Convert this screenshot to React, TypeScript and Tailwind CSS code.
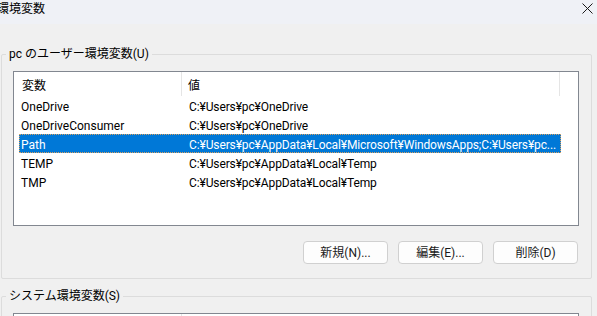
import React from "react";

interface EnvVar {
  name: string;
  value: string;
}

const userVars: EnvVar[] = [
  { name: "OneDrive", value: "C:¥Users¥pc¥OneDrive" },
  { name: "OneDriveConsumer", value: "C:¥Users¥pc¥OneDrive" },
  {
    name: "Path",
    value: "C:¥Users¥pc¥AppData¥Local¥Microsoft¥WindowsApps;C:¥Users¥pc...",
  },
  { name: "TEMP", value: "C:¥Users¥pc¥AppData¥Local¥Temp" },
  { name: "TMP", value: "C:¥Users¥pc¥AppData¥Local¥Temp" },
];

const WinButton = ({ label }: { label: string }) => (
  <button className="w-[85px] h-[23px] rounded-[4px] border border-[#d0d0d0] bg-[#fdfdfd] text-[12px] text-[#1a1a1a] leading-none">
    {label}
  </button>
);

const App: React.FC = () => {
  const selected = "Path";

  return (
    <div className="w-[597px] h-[316px] overflow-hidden bg-[#f0f0f0] text-[12px] text-black font-['Roboto','Noto_Sans_CJK_JP',sans-serif]">
      {/* title bar */}
      <div className="h-6 bg-[#eff1f6] flex items-start justify-between">
        <span className="-ml-[3px] mt-[1px] text-[12px] leading-[16px]">環境変数</span>
        <svg width="11" height="11" viewBox="0 0 11 11" className="mt-[3px] mr-[4px]">
          <path d="M0.5 0.5 L10.5 10.5 M10.5 0.5 L0.5 10.5" stroke="#1a1a1a" strokeWidth="1" />
        </svg>
      </div>

      <fieldset className="mt-[22px] ml-[1px] w-[591px] border border-[#dcdcdc] rounded-[2px] pl-[11px] pt-[9px] pb-[14px]">
        <legend className="-ml-[7px] px-[3px] leading-[16px]">pc のユーザー環境変数(U)</legend>

        <div className="w-[566px] h-[155px] border border-[#828790] bg-white">
          <div className="flex h-6 items-center">
            <div className="w-[168px] pl-[8px] pt-[4px] h-full flex items-center border-r border-[#e5e5e5]">変数</div>
            <div className="w-[378px] pl-[6px] pt-[4px] h-full flex items-center border-r border-[#e5e5e5]">値</div>
          </div>
          <div className="pl-[5px]">
            {userVars.map((v) => {
              const active = v.name === selected;
              return (
                <div
                  key={v.name}
                  className={`flex h-[19px] w-[542px] items-center pt-[3px] ${
                    active ? "bg-[#0078d7] text-white outline outline-1 outline-dotted outline-[#d8a060] -outline-offset-1" : ""
                  }`}
                >
                  <div className="w-[163px] pl-[2px] whitespace-nowrap">{v.name}</div>
                  <div className="w-[377px] pl-[7px] whitespace-nowrap tracking-[-0.12px]">{v.value}</div>
                </div>
              );
            })}
          </div>
        </div>

        <div className="mt-[15px] w-[566px] flex justify-end gap-[10px] pr-[1px]">
          <WinButton label="新規(N)..." />
          <WinButton label="編集(E)..." />
          <WinButton label="削除(D)" />
        </div>
      </fieldset>

      <fieldset className="mt-[9px] ml-[1px] w-[591px] border border-[#dcdcdc] rounded-[2px] pl-[11px] pt-[9px]">
        <legend className="-ml-[7px] px-[3px] leading-[16px]">システム環境変数(S)</legend>
        <div className="w-[566px] h-[60px] border border-[#828790] bg-white">
          <div className="flex h-6">
            <div className="w-[168px] border-r border-[#e5e5e5]" />
          </div>
        </div>
      </fieldset>
    </div>
  );
};

export default App;
